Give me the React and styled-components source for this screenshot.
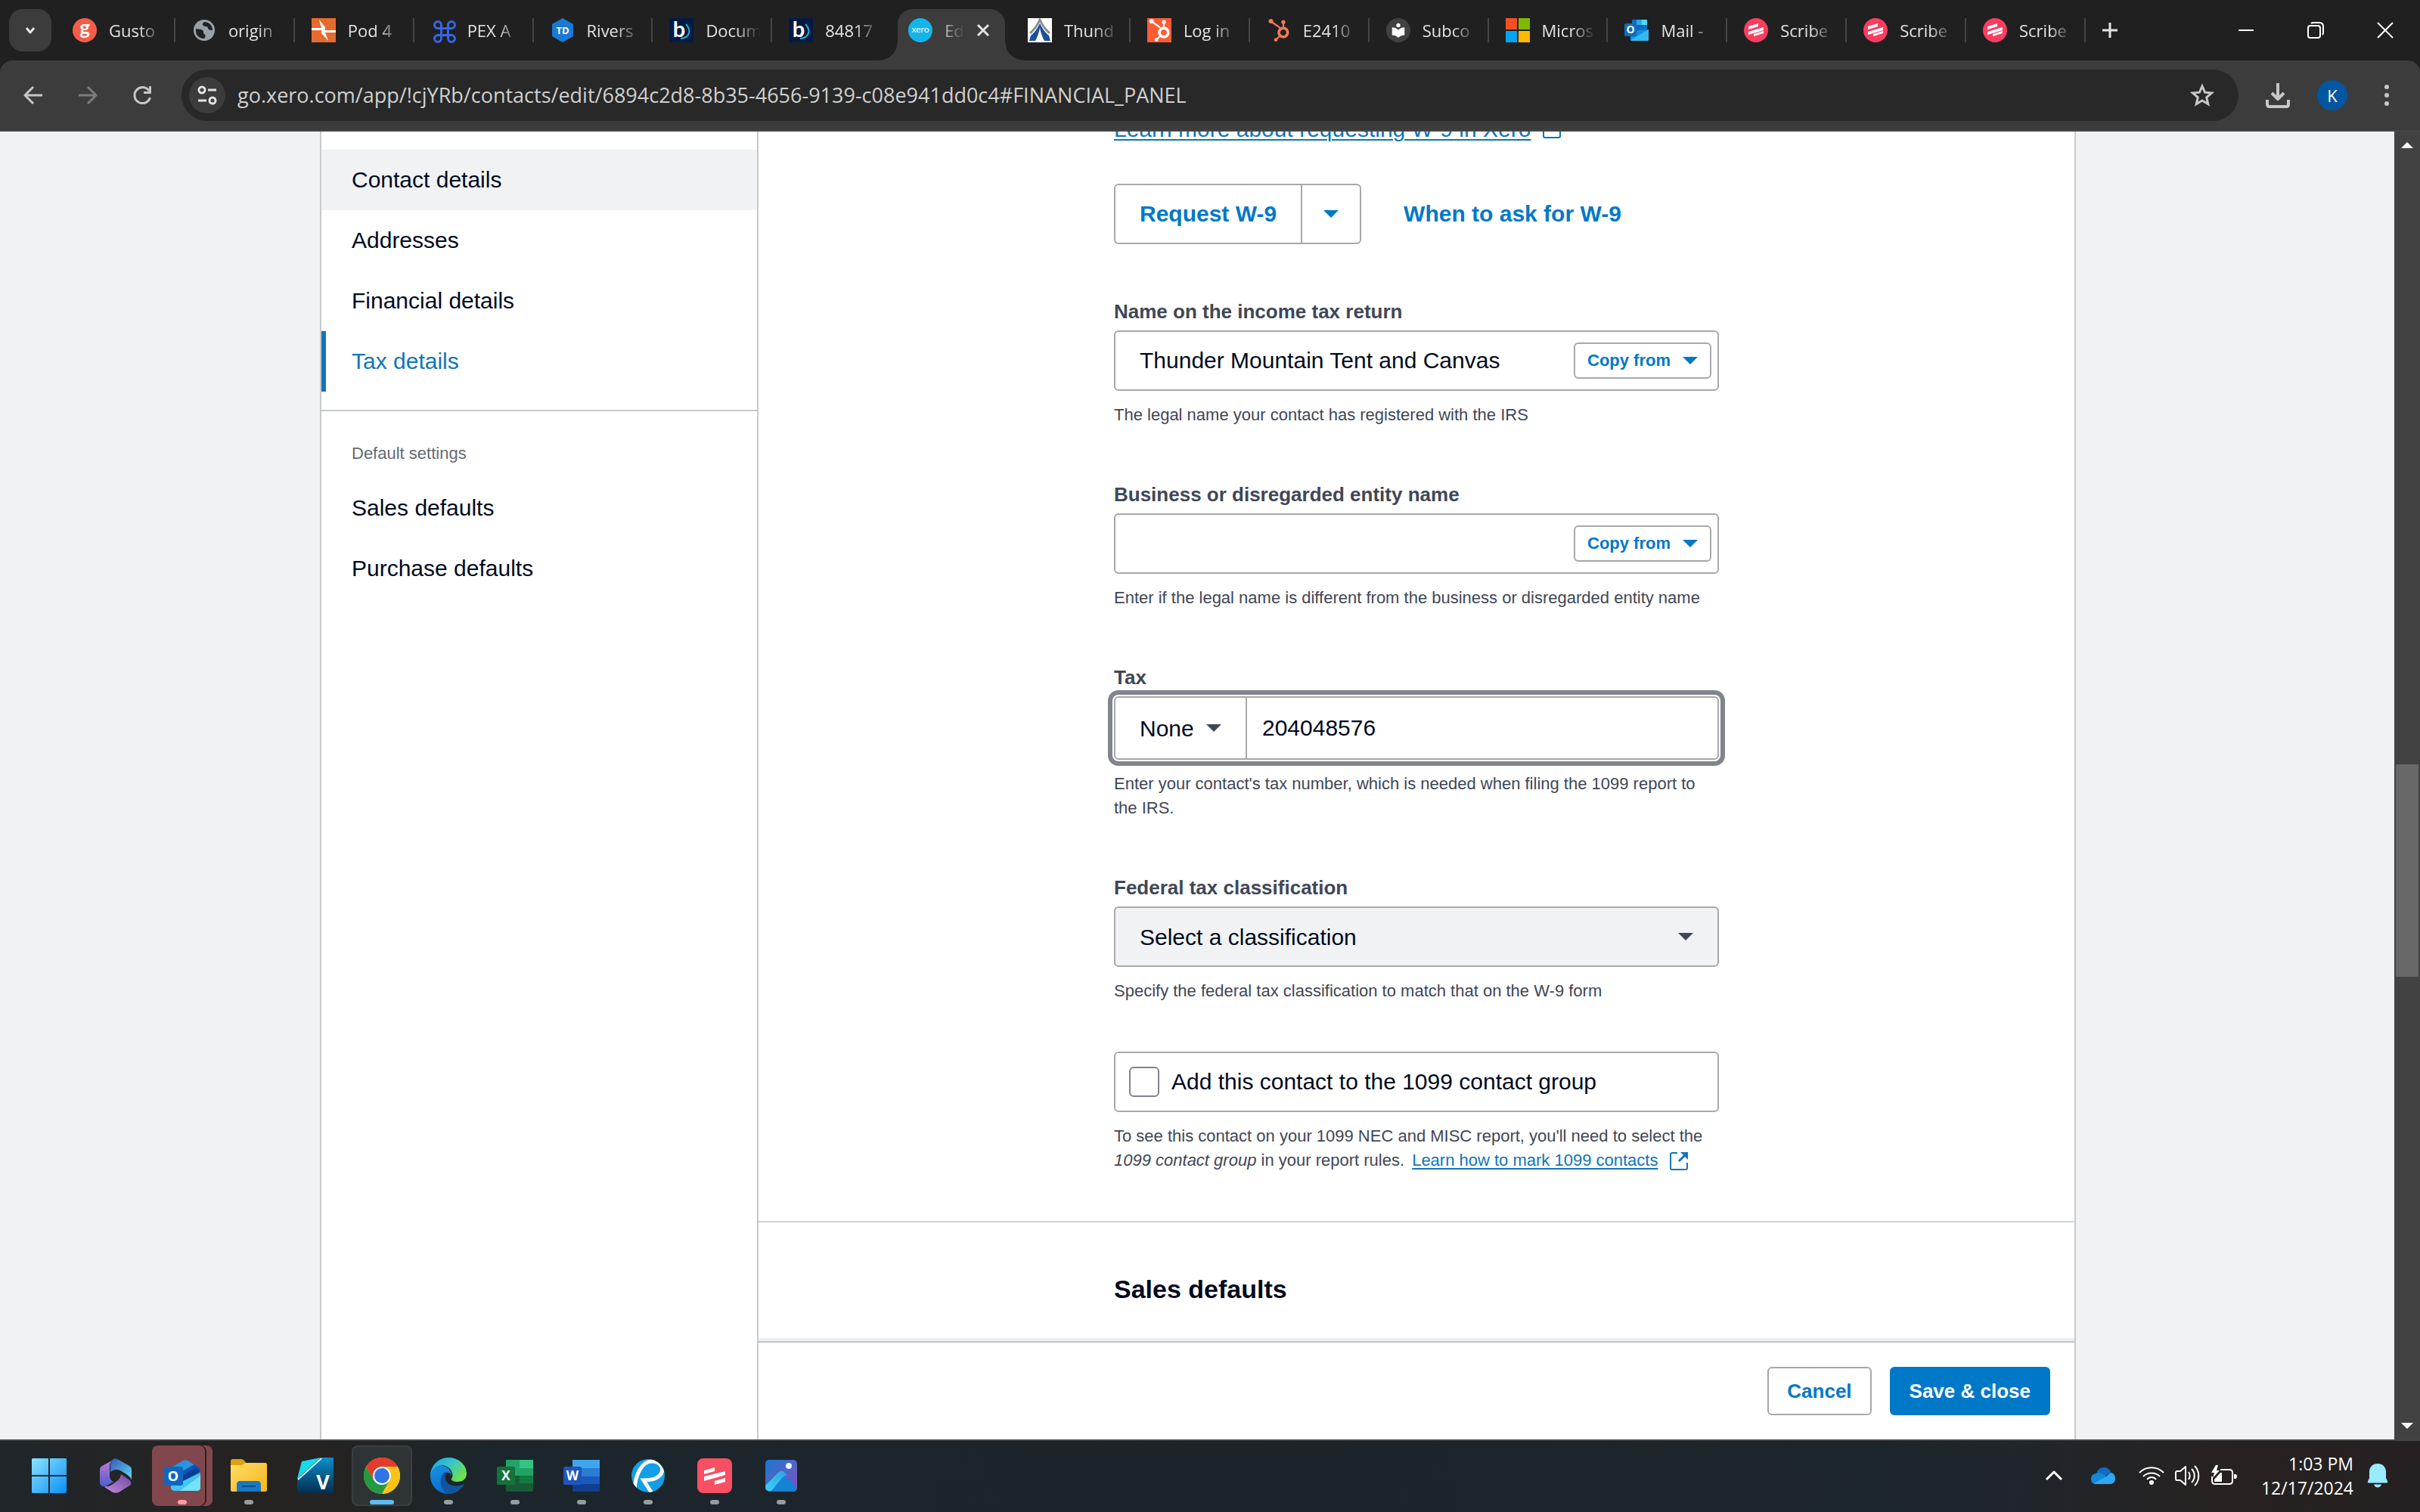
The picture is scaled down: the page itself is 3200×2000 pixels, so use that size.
import { useState } from "react";
import styled, { createGlobalStyle } from "styled-components";
import { Command } from "lucide-react";
import { FaHubspot } from "react-icons/fa";
import { MdLocalLibrary } from "react-icons/md";

const tabs = [
  { id: "gusto", title: "Gusto", icon: <GustoIcon /> },
  { id: "origin", title: "origin", icon: <GlobeIcon /> },
  { id: "pod", title: "Pod 4", icon: <PodIcon /> },
  { id: "pex", title: "PEX A", icon: <Command size={36} color="#3566e6" /> },
  { id: "rivers", title: "Rivers", icon: <TdIcon /> },
  { id: "docum", title: "Docum", icon: <BillIcon /> },
  { id: "84817", title: "84817", icon: <BillIcon /> },
  { id: "xero", title: "Ed", icon: <XeroIcon />, active: true },
  { id: "thunder", title: "Thund", icon: <TentIcon /> },
  { id: "login", title: "Log in", icon: <HubspotIcon /> },
  { id: "e2410", title: "E2410", icon: <FaHubspot size={30} color="#f2795c" /> },
  { id: "subco", title: "Subco", icon: <ReaderIcon /> },
  { id: "micro", title: "Micros", icon: <MicrosoftIcon /> },
  { id: "mail", title: "Mail -", icon: <OutlookIcon size={32} /> },
  { id: "scribe1", title: "Scribe", icon: <ScribeIcon /> },
  { id: "scribe2", title: "Scribe", icon: <ScribeIcon /> },
  { id: "scribe3", title: "Scribe", icon: <ScribeIcon /> },
];

const apps = [
  { name: "Start", icon: <WindowsIcon /> },
  { name: "Microsoft 365", icon: <CopilotIcon /> },
  { name: "Outlook", icon: <OutlookNewIcon />, state: "alert" },
  { name: "File Explorer", icon: <FolderIcon />, state: "open" },
  { name: "Vault", icon: <VaultIcon /> },
  { name: "Chrome", icon: <ChromeIcon />, state: "current" },
  { name: "Edge", icon: <EdgeIcon />, state: "open" },
  { name: "Excel", icon: <OfficeIcon letter="X" tile="#17713c" colors={["#21a366", "#33c481", "#107c41", "#185c37"]} />, state: "open" },
  { name: "Word", icon: <OfficeIcon letter="W" tile="#1d55bd" colors={["#41a5ee", "#2b7cd3", "#185abd", "#103f91"]} stripes />, state: "open" },
  { name: "Revu", icon: <RevuIcon />, state: "open" },
  { name: "Scribe", icon: <ScribeAppIcon />, state: "open" },
  { name: "Photos", icon: <PhotosIcon />, state: "open" },
];

export default function App() {
  const [url, setUrl] = useState("go.xero.com/app/!cjYRb/contacts/edit/6894c2d8-8b35-4656-9139-c08e941dd0c4#FINANCIAL_PANEL");
  return (
    <Screen>
      <GlobalStyle />
      <TabStrip>
        <TabSearch aria-label="Search tabs">
          <Stroke size={20} box="0 0 20 20" width={3}><path d="M5 7l5 6 5-6" /></Stroke>
        </TabSearch>
        <TabList>
          {tabs.map((tab, index) => (
            <Tab key={tab.id} $active={tab.active} $plain={tab.active || tabs[index + 1]?.active}>
              <TabButton>
                <Favicon>{tab.icon}</Favicon>
                <TabTitle>{tab.title}</TabTitle>
              </TabButton>
              {tab.active && (
                <CloseTab aria-label="Close tab">
                  <Stroke size={18} box="0 0 18 18" width={3}><path d="M2 2l14 14M16 2L2 16" /></Stroke>
                </CloseTab>
              )}
            </Tab>
          ))}
        </TabList>
        <NewTab aria-label="New tab">
          <Stroke size={22} box="0 0 22 22" width={3}><path d="M11 1v20M1 11h20" /></Stroke>
        </NewTab>
        <WindowSpacer />
        <WindowButton aria-label="Minimize">
          <Stroke size={20} box="0 0 20 20" width={2}><path d="M0 10h20" /></Stroke>
        </WindowButton>
        <WindowButton aria-label="Restore">
          <Stroke size={22} box="0 0 22 22" width={2}>
            <rect x="1" y="5" width="16" height="16" rx="3" />
            <path d="M5 2c1-1 2-1 3-1h8c3 0 5 2 5 5v8c0 1 0 2-1 3" />
          </Stroke>
        </WindowButton>
        <WindowButton aria-label="Close">
          <Stroke size={22} box="0 0 22 22" width={2}><path d="M1 1l20 20M21 1L1 21" /></Stroke>
        </WindowButton>
      </TabStrip>

      <Toolbar>
        <ToolButton aria-label="Back">
          <Stroke size={26} box="0 0 26 26" width={3}><path d="M25 13H3M13 2L2 13l11 11" /></Stroke>
        </ToolButton>
        <ToolButton aria-label="Forward" disabled>
          <Stroke size={26} box="0 0 26 26" width={3}><path d="M1 13h22M13 2l11 11-11 11" /></Stroke>
        </ToolButton>
        <ToolButton aria-label="Reload">
          <Stroke size={26} box="0 0 26 26" width={3}>
            <path d="M22 7a10.5 10.5 0 1 0 1.500 9" />
            <path d="M23.500 1v8.500H15" />
          </Stroke>
        </ToolButton>
        <AddressBar>
          <SiteInfo aria-label="View site information">
            <Stroke size={26} box="0 0 26 26" width={3}>
              <circle cx="6" cy="6" r="4" /><path d="M14 6h11M1 20h11" /><circle cx="20" cy="20" r="4" />
            </Stroke>
          </SiteInfo>
          <UrlInput aria-label="Address" value={url} onChange={(e) => setUrl(e.target.value)} />
          <StarButton aria-label="Bookmark this tab">
            <Stroke size={32} box="0 0 32 32" width={3} miter>
              <path d="M16 4l3.600 8.200 8.900.8-6.800 5.900 2.100 8.700L16 23l-7.800 4.600 2.100-8.700L3.500 13l8.900-.8z" />
            </Stroke>
          </StarButton>
        </AddressBar>
        <ToolButton aria-label="Downloads">
          <Stroke size={34} box="0 0 34 34" width={4}>
            <path d="M17 1v22M9 14l8 8 8-8" /><path d="M3 23v6c0 2 1 3 3 3h22c2 0 3-1 3-3v-6" />
          </Stroke>
        </ToolButton>
        <ToolButton aria-label="Profile"><Avatar>K</Avatar></ToolButton>
        <ToolButton aria-label="Menu">
          <svg width="8" height="30" viewBox="0 0 8 30" fill="currentColor">
            <circle cx="4" cy="4" r="3" /><circle cx="4" cy="15" r="3" /><circle cx="4" cy="26" r="3" />
          </svg>
        </ToolButton>
      </Toolbar>

      <Viewport>
        <PageArea>
          <ContactPage />
        </PageArea>
        <Scrollbar>
          <ScrollArrow aria-label="Scroll up"><Caret size={16} up color="#fff" /></ScrollArrow>
          <ScrollTrack><ScrollThumb /></ScrollTrack>
          <ScrollArrow aria-label="Scroll down"><Caret size={16} color="#fff" /></ScrollArrow>
        </Scrollbar>
      </Viewport>

      <Taskbar>
        <Apps>
          {apps.map((app) => (
            <AppButton key={app.name} aria-label={app.name} $state={app.state}>
              {app.icon}
              {app.state && <Indicator $state={app.state} />}
            </AppButton>
          ))}
        </Apps>
        <Tray>
          <Stroke size={24} box="0 0 24 24" width={3}><path d="M2 17L12 7l10 10" /></Stroke>
          <OneDriveIcon />
          <TrayGroup>
            <WifiIcon />
            <VolumeIcon />
            <BatteryIcon />
          </TrayGroup>
          <Clock>
            <time>1:03 PM</time>
            <time>12/17/2024</time>
          </Clock>
          <svg width="28" height="34" viewBox="0 0 28 34" fill="#99ecff">
            <path d="M14 1C7.500 1 3 5.500 3 12v8L1 24.500c-.5 1.200 0 2 1.200 2h23.600c1.200 0 1.700-.8 1.200-2L25 20v-8C25 5.500 20.500 1 14 1z" />
            <path d="M9 28.500h10c-.8 2.600-2.600 4-5 4s-4.200-1.400-5-4z" />
          </svg>
        </Tray>
      </Taskbar>
    </Screen>
  );
}

function ContactPage() {
  const [legalName, setLegalName] = useState("Thunder Mountain Tent and Canvas");
  const [businessName, setBusinessName] = useState("");
  const [taxNumber, setTaxNumber] = useState("204048576");

  return (
    <Container>
      <Sidebar>
        <NavGroup>
          <NavLink href="#contact" $hover>Contact details</NavLink>
          <NavLink href="#addresses">Addresses</NavLink>
          <NavLink href="#financial">Financial details</NavLink>
          <NavLink href="#tax" $current>Tax details</NavLink>
        </NavGroup>
        <NavGroup $last>
          <NavHeading>Default settings</NavHeading>
          <NavLink href="#sales">Sales defaults</NavLink>
          <NavLink href="#purchases">Purchase defaults</NavLink>
        </NavGroup>
      </Sidebar>

      <Main>
        <Sections>
          <TaxSection>
            <LearnMore>
              <TextLink href="#w9">Learn more about requesting W-9 in Xero</TextLink>
              <ExternalIcon />
            </LearnMore>

            <RequestRow>
              <SplitButton>
                <button>Request W-9</button>
                <button aria-label="More request options"><Caret color="#0078c8" /></button>
              </SplitButton>
              <PlainButton>When to ask for W-9</PlainButton>
            </RequestRow>

            <Group>
              <Label htmlFor="legal-name">Name on the income tax return</Label>
              <Field>
                <TextInput id="legal-name" value={legalName} onChange={(e) => setLegalName(e.target.value)} />
                <CopyButton>Copy from <Caret color="#0078c8" /></CopyButton>
              </Field>
              <Hint>The legal name your contact has registered with the IRS</Hint>
            </Group>

            <Group>
              <Label htmlFor="business-name">Business or disregarded entity name</Label>
              <Field>
                <TextInput id="business-name" value={businessName} onChange={(e) => setBusinessName(e.target.value)} />
                <CopyButton>Copy from <Caret color="#0078c8" /></CopyButton>
              </Field>
              <Hint>Enter if the legal name is different from the business or disregarded entity name</Hint>
            </Group>

            <Group>
              <Label htmlFor="tax-number">Tax</Label>
              <Field $focused>
                <TypeSelect>
                  <select aria-label="Tax number type" defaultValue="None">
                    <option>None</option>
                    <option>EIN</option>
                    <option>SSN</option>
                  </select>
                  <Caret color="#404756" />
                </TypeSelect>
                <TextInput id="tax-number" $joined value={taxNumber} onChange={(e) => setTaxNumber(e.target.value)} />
              </Field>
              <Hint>Enter your contact's tax number, which is needed when filing the 1099 report to the IRS.</Hint>
            </Group>

            <Group>
              <Label htmlFor="classification">Federal tax classification</Label>
              <Field $filled>
                <SelectWrap>
                  <select id="classification" defaultValue="">
                    <option value="">Select a classification</option>
                    <option>Individual/Sole proprietor</option>
                    <option>C Corporation</option>
                  </select>
                  <Caret color="#404756" />
                </SelectWrap>
              </Field>
              <Hint>Specify the federal tax classification to match that on the W-9 form</Hint>
            </Group>

            <CheckGroup>
              <CheckField>
                <input type="checkbox" />
                Add this contact to the 1099 contact group
              </CheckField>
              <Hint>
                To see this contact on your 1099 NEC and MISC report, you'll need to select the{" "}
                <em>1099 contact group</em> in your report rules.{" "}
                <TextLink href="#mark-1099">Learn how to mark 1099 contacts</TextLink>
                <HintIcon><ExternalIcon /></HintIcon>
              </Hint>
            </CheckGroup>
          </TaxSection>

          <SalesSection>
            <h2>Sales defaults</h2>
          </SalesSection>
        </Sections>

        <Footer>
          <FooterButton>Cancel</FooterButton>
          <FooterButton $primary>Save &amp; close</FooterButton>
        </Footer>
      </Main>
    </Container>
  );
}

/* icons */

function Stroke({ size, box, width, miter, children }) {
  return (
    <svg width={size} height={size} viewBox={box} fill="none" stroke="currentColor" strokeWidth={width} strokeLinejoin={miter ? "miter" : "round"}>
      {children}
    </svg>
  );
}

function Caret({ size = 20, color, up }) {
  return (
    <svg width={size} height={size / 2} viewBox="0 0 20 10" fill={color} aria-hidden="true">
      <path d={up ? "M0 10h20L10 0z" : "M0 0h20L10 10z"} />
    </svg>
  );
}

function ExternalIcon() {
  return (
    <svg width="24" height="24" viewBox="0 0 24 24" fill="none" stroke="#1076b8" strokeWidth="2" aria-hidden="true">
      <path d="M10 1H3C2 1 1 2 1 3v18c0 1 1 2 2 2h18c1 0 2-1 2-2v-7" />
      <path d="M12 12L21 3" strokeWidth="3" />
      <path d="M14 0h10v10z" fill="#1076b8" stroke="none" />
    </svg>
  );
}

function GustoIcon() {
  return (
    <svg width="32" height="32" viewBox="0 0 32 32">
      <circle cx="16" cy="16" r="16" fill="#f45d48" />
      <text x="16" y="22" fontSize="26" fontWeight="700" fontFamily="Lato, sans-serif" fill="#fff" textAnchor="middle">g</text>
    </svg>
  );
}

function GlobeIcon() {
  return (
    <svg width="28" height="28" viewBox="0 0 28 28">
      <circle cx="14" cy="14" r="14" fill="#9aa0a6" />
      <path d="M3 12c3 1 7 0 9 2s0 4 2 5 2 4 0 6C7 25 2 20 3 12zM14 3c-2 2-3 3-1 5s5 0 6 3 3 3 6 3c0-6-4-11-11-11z" fill="#202124" />
    </svg>
  );
}

function PodIcon() {
  return (
    <svg width="32" height="32" viewBox="0 0 32 32">
      <path fill="#e66b2e" d="M0 0h32v32H0z" />
      <path fill="#fff" d="M10 2l8 10v4H0v-3h13zM22 30l-9-10v-4h19v3H18z" />
    </svg>
  );
}

function TdIcon() {
  return (
    <svg width="32" height="32" viewBox="0 0 32 32">
      <path fill="#1b78d6" d="M16 0l14 8v16l-14 8-14-8V8z" />
      <text x="16" y="21" fontSize="13" fontWeight="700" fontFamily="Open Sans, sans-serif" fill="#fff" textAnchor="middle">TD</text>
    </svg>
  );
}

function BillIcon() {
  return (
    <svg width="32" height="32" viewBox="0 0 32 32">
      <path fill="#041a45" d="M0 0h32v32H0z" />
      <text x="13" y="25" fontSize="29" fontWeight="700" fontFamily="Lato, sans-serif" fill="#fff" textAnchor="middle">b</text>
      <path d="M22 8c7 7 6 18-7 19" fill="none" stroke="#19b5c9" strokeWidth="2" />
    </svg>
  );
}

function XeroIcon() {
  return (
    <svg width="32" height="32" viewBox="0 0 32 32">
      <circle cx="16" cy="16" r="16" fill="#13b5ea" />
      <text x="16" y="19" fontSize="12" fontFamily="Lato, sans-serif" fill="#fff" textAnchor="middle">xero</text>
    </svg>
  );
}

function TentIcon() {
  return (
    <svg width="32" height="32" viewBox="0 0 32 32">
      <path fill="#fff" d="M0 0h32v32H0z" />
      <path d="M3 20C9 15 13 9 16 2c3 7 7 13 13 18" fill="none" stroke="#8b8e93" strokeWidth="3" />
      <path fill="#1d4f9c" d="M16 7C12 15 8 20 4 23l-2 7h8c3-5 5-12 6-17 1 5 3 12 6 17h8l-2-7c-4-3-8-8-12-16z" />
    </svg>
  );
}

function HubspotIcon() {
  return <IconTile><FaHubspot size={30} /></IconTile>;
}

function ReaderIcon() {
  return <IconTile $round><MdLocalLibrary size={22} /></IconTile>;
}

function MicrosoftIcon() {
  return (
    <svg width="32" height="32" viewBox="0 0 32 32">
      <path fill="#f25022" d="M0 0h15v15H0z" /><path fill="#7fba00" d="M17 0h15v15H17z" />
      <path fill="#00a4ef" d="M0 17h15v15H0z" /><path fill="#ffb900" d="M17 17h15v15H17z" />
    </svg>
  );
}

function OutlookIcon({ size }) {
  return (
    <svg width={size} height={size} viewBox="0 0 32 32">
      <path fill="#0f6cbd" d="M10 2h20v14H10z" /><path fill="#28a8ea" d="M16 2h7v7h-7z" />
      <path fill="#50d9ff" d="M23 2h7v7h-7z" /><path fill="#0358a7" d="M10 9h6v7h-6z" />
      <path fill="#1490df" d="M8 17l24-2v13c0 1-1 2-2 2H10c-1 0-2-1-2-2z" />
      <path fill="#35b8f1" d="M8 29l24-14v13c0 1-1 2-2 2H10z" />
      <rect y="7" width="16" height="17" rx="2" fill="#0f6cbd" />
      <text x="8" y="20" fontSize="14" fontWeight="700" fontFamily="Open Sans, sans-serif" fill="#fff" textAnchor="middle">O</text>
    </svg>
  );
}

function ScribeIcon() {
  return (
    <svg width="32" height="32" viewBox="0 0 32 32">
      <circle cx="16" cy="16" r="16" fill="#fc3d60" />
      <path fill="#fff" d="M6 11l13-4v4L6 15zM6 18l20-6v4L6 22zM13 24l13-4v-3l-13 4z" />
    </svg>
  );
}

function WindowsIcon() {
  return (
    <svg width="46" height="46" viewBox="0 0 46 46">
      <defs>
        <linearGradient id="win" x1="0" y1="0" x2="46" y2="46" gradientUnits="userSpaceOnUse">
          <stop stopColor="#8ae4ff" /><stop offset="1" stopColor="#0a8ff5" />
        </linearGradient>
      </defs>
      <path fill="url(#win)" d="M1 0h21v22H0V1zM24 0h21l1 1v21H24zM0 24h22v22H1l-1-1zM24 24h22v21l-1 1H24z" />
    </svg>
  );
}

function CopilotIcon() {
  return (
    <svg width="42" height="46" viewBox="0 0 42 46">
      <defs>
        <linearGradient id="c1" x1="0" y1="0" x2="0" y2="1"><stop stopColor="#c77ad9" /><stop offset="1" stopColor="#4a5fc9" /></linearGradient>
        <linearGradient id="c2" x1="0" y1="0" x2="1" y2="1"><stop stopColor="#3556b8" /><stop offset="1" stopColor="#5fdcf5" /></linearGradient>
        <linearGradient id="c3" x1="0" y1="1" x2="1" y2="0"><stop stopColor="#c58be0" /><stop offset="1" stopColor="#6b489c" /></linearGradient>
      </defs>
      <path fill="url(#c1)" d="M20 1L3 10c-2 1-3 3-3 5v17c0 4 4 6 8 5l10-6c-4-2-5-5-5-8V10c0-5 3-8 7-9z" />
      <path fill="url(#c2)" d="M18 1c3-1 5 0 7 1l14 8c2 1 3 3 3 5v14c0-3-4-6-7-8l-8-5c-5-2-9-1-13 2v-9c0-4 1-6 4-8z" />
      <path fill="url(#c3)" d="M8 37c5 1 9-3 12-5 5-3 7-6 8-11l9 6c4 3 5 5 4 8l-16 10c-3 1-5 1-8 0L6 38z" />
    </svg>
  );
}

function OutlookNewIcon() {
  return (
    <svg width="50" height="44" viewBox="0 0 50 44">
      <path fill="#2596df" d="M9 12L26 2c2-1 4-1 6 0l16 10-24 16H9z" />
      <path fill="#0d52b3" d="M22 18L41 7l7 5c2 2 1 4-1 6L24 31z" />
      <path fill="#0a3f98" d="M24 22l20-10 4 4-24 15z" />
      <path fill="#43c6f3" d="M49 18v19c0 3-2 5-5 5H16c-4 0-6-2-6-5V30h14z" />
      <path fill="#74e2fa" d="M49 22v15c0 3-2 5-5 5H22z" />
      <rect x="1" y="10" width="25" height="25" rx="3" fill="#1066c0" />
      <text x="13" y="29" fontSize="18" fontWeight="700" fontFamily="Open Sans, sans-serif" fill="#fff" textAnchor="middle">O</text>
    </svg>
  );
}

function FolderIcon() {
  return (
    <svg width="48" height="44" viewBox="0 0 48 44">
      <defs>
        <linearGradient id="fold" x1="0" y1="0" x2="1" y2="1"><stop stopColor="#ffdc66" /><stop offset="1" stopColor="#f8b71b" /></linearGradient>
      </defs>
      <path fill="#dca015" d="M0 3c0-2 1-3 3-3h11c2 0 3 1 4 2l4 5-6 5H0z" />
      <path fill="url(#fold)" d="M0 8h15l5-3h26c1 0 2 1 2 2v34c0 1-1 2-2 2H2c-1 0-2-1-2-2z" />
      <path fill="#1a76c2" d="M8 43V34c0-4 2-5 5-5h22c3 0 5 1 5 5v9z" />
      <path d="M15 36h18" stroke="#0d4f88" strokeWidth="2" />
    </svg>
  );
}

function VaultIcon() {
  return (
    <svg width="48" height="48" viewBox="0 0 48 48">
      <defs>
        <linearGradient id="vlt" x1="0" y1="0" x2="0" y2="1"><stop stopColor="#0b8ecb" /><stop offset="1" stopColor="#062b4c" /></linearGradient>
      </defs>
      <path fill="url(#vlt)" d="M0 30L32 0h15l1 1v47H0z" />
      <path fill="#16d9ec" d="M0 28L6 5l25-5z" /><path d="M1 29L32 1" stroke="#d8fbff" strokeWidth="2" />
      <text x="34" y="42" fontSize="27" fontWeight="700" fontFamily="Open Sans, sans-serif" fill="#fff" textAnchor="middle">V</text>
    </svg>
  );
}

function ChromeIcon() {
  return (
    <svg width="48" height="48" viewBox="0 0 48 48">
      <circle cx="24" cy="24" r="24" fill="#fbc116" />
      <path fill="#e33b2e" d="M3.200 12A24 24 0 0 1 44.800 12H24L13.600 30z" />
      <path fill="#269a42" d="M3.200 12A24 24 0 0 0 24 48L34.400 30 24 24 13.600 30z" />
      <path fill="#fbc116" d="M24 48a24 24 0 0 0 20.800-36H24l10.400 18z" />
      <circle cx="24" cy="24" r="12" fill="#fff" /><circle cx="24" cy="24" r="10" fill="#2f74e8" />
    </svg>
  );
}

function EdgeIcon() {
  return (
    <svg width="48" height="48" viewBox="0 0 48 48">
      <defs>
        <linearGradient id="e1" x1="0" y1="0" x2="1" y2="0.6"><stop stopColor="#1c9ddd" /><stop offset=".5" stopColor="#35c4cf" /><stop offset="1" stopColor="#6fe04b" /></linearGradient>
        <linearGradient id="e2" x1="0" y1="0" x2="0.4" y2="1"><stop stopColor="#1793e0" /><stop offset="1" stopColor="#0a6bd0" /></linearGradient>
      </defs>
      <path fill="url(#e2)" d="M0 24C0 14 8 9 16 11c8 1 12 7 12 13-1-4-5-5-8-4-8 3-6 18 12 19 5 0 8-1 11-3C39 43 32 48 24 48 11 48 0 38 0 24z" />
      <path fill="#12559f" d="M20 19c-8 4-10 18 2 29 9 1 17-4 22-11 1-1 0-2-2-1-10 4-20 0-22-7-1-4 0-7 0-10z" />
      <path fill="url(#e1)" d="M0 23C1 10 11 0 24 0c14 0 24 10 24 21 0 8-6 11-12 11-5 0-9-2-8-4 3-4 1-10-3-14C17 7 3 10 0 23z" />
    </svg>
  );
}

function OfficeIcon({ letter, tile, colors, stripes }) {
  const [a, b, c, d] = colors;
  return (
    <svg width="48" height="44" viewBox="0 0 48 44">
      {stripes ? (
        <>
          <path fill={a} d="M12 1h36v11H12z" /><path fill={b} d="M12 12h36v11H12z" />
          <path fill={c} d="M12 23h36v10H12z" /><path fill={d} d="M12 33h36v10H12z" />
        </>
      ) : (
        <>
          <path fill={a} d="M12 1h18v21H12z" /><path fill={b} d="M30 1h18v11H30z" />
          <path fill={a} d="M30 12h18v10H30z" /><path fill={c} d="M30 22h18v10H30z" />
          <path fill={d} d="M12 22h18v10h18v11H12z" />
        </>
      )}
      <rect y="10" width="24" height="24" rx="2" fill={tile} />
      <text x="12" y="28" fontSize="17" fontWeight="700" fontFamily="Open Sans, sans-serif" fill="#fff" textAnchor="middle">{letter}</text>
    </svg>
  );
}

function RevuIcon() {
  return (
    <svg width="46" height="46" viewBox="0 0 46 46">
      <clipPath id="revu"><circle cx="23" cy="23" r="22" /></clipPath>
      <circle cx="23" cy="23" r="22" fill="#129fe6" />
      <path clipPath="url(#revu)" d="M5 42C6 20 16 3 29 4s16 12 9 19c-5 5-14 6-21 6l11 17" fill="none" stroke="#fff" strokeWidth="5" />
    </svg>
  );
}

function ScribeAppIcon() {
  return (
    <svg width="46" height="46" viewBox="0 0 46 46">
      <rect width="46" height="46" rx="8" fill="#f94f63" />
      <path fill="#fff" d="M9 16l14-4v5L9 21zM9 24l28-7v5L9 30zM23 30l14-4v5l-14 4z" />
    </svg>
  );
}

function PhotosIcon() {
  return (
    <svg width="42" height="42" viewBox="0 0 42 42">
      <defs>
        <linearGradient id="ph1" x1="0" y1="0" x2="1" y2="1"><stop stopColor="#1879cf" /><stop offset="1" stopColor="#8351bd" /></linearGradient>
        <linearGradient id="ph2" x1="0" y1="1" x2="1" y2="0"><stop stopColor="#3fd0f5" /><stop offset="1" stopColor="#2aa4e2" /></linearGradient>
      </defs>
      <rect width="42" height="42" rx="5" fill="url(#ph1)" />
      <path fill="#1583d3" d="M3 41L24 20l17 16c1 3-1 6-4 6H6z" />
      <path fill="url(#ph2)" d="M1 33l16-16c3-3 6-3 9 0l3 4c-3-1-5 1-7 3L9 40c-5 4-11-2-8-7z" />
      <circle cx="31" cy="8" r="4" fill="#e6f6ff" />
    </svg>
  );
}

function OneDriveIcon() {
  return (
    <svg width="34" height="24" viewBox="0 0 34 24">
      <path fill="#0f6cc4" d="M8 9C10 3 14 1 18 1c5 0 8 3 9 7L15 16z" />
      <path fill="#1487dc" d="M8 9c-4 0-7 3-7 7 0 5 3 7 6 7l14-10-6-4c-2-1-4-1-7 0z" />
      <path fill="#2ba9f2" d="M5 22l16-9 6-5c4 0 6 4 6 8s-3 7-6 7H8c-1 0-2 0-3-1z" />
    </svg>
  );
}

function WifiIcon() {
  return (
    <svg width="34" height="26" viewBox="0 0 34 26" fill="none" stroke="#fff" strokeWidth="2">
      <path d="M1 9c9-9 23-9 32 0M6 14c6-6 16-6 22 0M11 18c3-4 9-4 12 0" />
      <circle cx="17" cy="22" r="3" fill="#fff" stroke="none" />
    </svg>
  );
}

function VolumeIcon() {
  return (
    <svg width="34" height="30" viewBox="0 0 34 30" fill="none" stroke="#fff" strokeWidth="2" strokeLinejoin="round">
      <path d="M1 11v8c0 1 1 2 2 2h4l7 6V3L7 9H3c-1 0-2 1-2 2z" />
      <path d="M18 10c2 3 2 7 0 10M22 6c5 5 5 13 0 18M26 2c7 7 7 19 0 26" />
    </svg>
  );
}

function BatteryIcon() {
  return (
    <svg width="34" height="28" viewBox="0 0 34 28">
      <path d="M12 6h12c3 0 4 1 4 4v11c0 3-1 4-4 4H5c-3 0-4-1-4-4v-6" fill="none" stroke="#fff" strokeWidth="2" />
      <path fill="#fff" d="M30 12h2c1 0 2 1 2 3s-1 3-2 3h-2zM4 22v-3l8-9h2v12zM6 0L0 10h4L2 17 11 7H7L9 0z" />
    </svg>
  );
}

/* styles */

const GlobalStyle = createGlobalStyle`
  * {
    box-sizing: border-box;
  }
  body {
    margin: 0;
    font-family: "Liberation Sans", Arial, sans-serif;
    font-size: 30px;
    color: #000a1e;
  }
  button, input, select {
    font: inherit;
    color: inherit;
    background: none;
    border: 0;
    margin: 0;
    padding: 0;
    outline: 0;
  }
  svg {
    display: block;
    flex: none;
  }
`;
const Screen = styled.div`
  height: 100vh;
  display: flex;
  flex-direction: column;
  overflow: hidden;
  background: #202020;
`;
const TabStrip = styled.header`
  height: 80px;
  flex: none;
  display: flex;
  align-items: center;
  padding-left: 12px;
  color: #e3e3e3;
  font-family: "Open Sans", "Noto Sans", sans-serif;
  font-size: 22px;
`;
const TabSearch = styled.button`
  width: 56px;
  height: 56px;
  margin-right: 6px;
  border-radius: 18px;
  background: #3c3c3c;
  display: grid;
  place-items: center;
`;
const TabList = styled.div`
  flex: 1;
  min-width: 0;
  height: 100%;
  display: flex;
`;
const Tab = styled.div`
  flex: 1 1 0;
  min-width: 0;
  position: relative;
  display: flex;
  align-items: center;
  padding: 0 16px 0 22px;
  z-index: 0;

  &::after {
    content: "";
    position: absolute;
    right: 0;
    top: 24px;
    width: 2px;
    height: 32px;
    background: ${(props) => (props.$plain ? "transparent" : "#454545")};
  }

  ${(props) => props.$active && `
    &::before {
      content: "";
      position: absolute;
      z-index: -1;
      inset: 12px -16px 0;
      background:
        radial-gradient(circle at 0 0, transparent 23px, #3c3c3c 24px) left bottom / 24px 24px no-repeat,
        radial-gradient(circle at 100% 0, transparent 23px, #3c3c3c 24px) right bottom / 24px 24px no-repeat;
    }
    &::after {
      z-index: -1;
      inset: 12px 8px 0;
      width: auto;
      height: auto;
      border-radius: 20px 20px 0 0;
      background: #3c3c3c;
    }
  `}
`;
const TabButton = styled.button`
  flex: 1;
  min-width: 0;
  display: flex;
  align-items: center;
  gap: 16px;
`;
const Favicon = styled.span`
  width: 32px;
  height: 32px;
  flex: none;
  display: grid;
  place-items: center;
`;
const TabTitle = styled.span`
  flex: 1;
  min-width: 0;
  overflow: hidden;
  white-space: nowrap;
  text-align: left;
  line-height: 32px;
  mask-image: linear-gradient(to right, #000 calc(100% - 32px), transparent);
`;
const CloseTab = styled.button`
  flex: none;
  margin: 0 12px 0 16px;
`;
const NewTab = styled.button`
  width: 64px;
  height: 56px;
  display: grid;
  place-items: center;
`;
const WindowSpacer = styled.div`
  width: 102px;
`;
const WindowButton = styled.button`
  width: 92px;
  height: 80px;
  display: grid;
  place-items: center;
  color: #fff;
`;
const IconTile = styled.span`
  width: 32px;
  height: 32px;
  display: grid;
  place-items: center;
  border-radius: ${(props) => (props.$round ? "50%" : "0")};
  background: ${(props) => (props.$round ? "#414141" : "#ff5c35")};
  color: #fff;
`;

const Toolbar = styled.div`
  height: 94px;
  flex: none;
  display: flex;
  align-items: center;
  padding: 0 8px;
  background: #3c3c3c;
  border-bottom: 2px solid #474747;
  border-radius: 16px 16px 0 0;
  color: #c7c7c7;
  font-family: "Open Sans", "Noto Sans", sans-serif;
`;
const ToolButton = styled.button`
  width: 72px;
  height: 72px;
  flex: none;
  display: grid;
  place-items: center;

  &:disabled {
    color: #7c7c7c;
  }
`;
const AddressBar = styled.div`
  flex: 1;
  height: 68px;
  margin: 0 16px;
  padding: 0 32px 0 10px;
  border-radius: 34px;
  background: #282828;
  display: flex;
  align-items: center;
  gap: 16px;
`;
const SiteInfo = styled.button`
  width: 48px;
  height: 48px;
  border-radius: 50%;
  background: #3c3c3c;
  color: #e3e3e3;
  display: grid;
  place-items: center;
`;
const UrlInput = styled.input`
  flex: 1;
  min-width: 0;
  font-size: 27px;
  line-height: 36px;
  color: #d0d0d0;
`;
const StarButton = styled.button`
  flex: none;
`;
const Avatar = styled.span`
  width: 40px;
  height: 40px;
  border-radius: 50%;
  background: #00579f;
  color: #fff;
  font-size: 22px;
  line-height: 40px;
`;

const Viewport = styled.div`
  flex: 1;
  min-height: 0;
  display: flex;
`;
const PageArea = styled.div`
  flex: 1;
  min-width: 0;
  display: flex;
  justify-content: center;
  background: #f0f2f4;
`;
const Scrollbar = styled.div`
  width: 32px;
  padding-right: 2px;
  display: flex;
  flex-direction: column;
  background: #424242;
  box-shadow: -2px 0 0 #424242;
`;
const ScrollArrow = styled.button`
  height: 36px;
  display: grid;
  place-items: center;
`;
const ScrollTrack = styled.div`
  flex: 1;
  display: grid;
  grid-template-rows: 801fr 281fr 576fr;
`;
const ScrollThumb = styled.div`
  grid-row: 2;
  background: #686868;
`;

const Container = styled.div`
  width: 100%;
  max-width: 2322px;
  display: flex;
  background: #fff;
  border: solid #c8cacd;
  border-width: 0 2px;
`;
const Sidebar = styled.nav`
  width: 578px;
  flex: none;
  border-right: 2px solid #c8cacd;
`;
const NavGroup = styled.div`
  display: flex;
  flex-direction: column;
  padding: ${(props) => (props.$last ? "40px" : "24px")} 0 24px;
  border-bottom: ${(props) => (props.$last ? "0" : "2px solid #c8cacd")};
`;
const NavLink = styled.a`
  padding: 16px 40px 16px ${(props) => (props.$current ? "34px" : "40px")};
  border-left: ${(props) => (props.$current ? "6px solid #1076b8" : "0")};
  background: ${(props) => (props.$hover ? "#f0f2f4" : "none")};
  color: ${(props) => (props.$current ? "#1076b8" : "#000a1e")};
  line-height: 48px;
  text-decoration: none;
`;
const NavHeading = styled.span`
  padding: 0 40px;
  margin-bottom: 16px;
  font-size: 22px;
  line-height: 32px;
  color: #666a73;
`;

const Main = styled.main`
  flex: 1;
  min-width: 0;
  display: flex;
  flex-direction: column;
`;
const Sections = styled.div`
  flex: 1;
  min-height: 0;
  overflow: hidden;
`;
const TaxSection = styled.section`
  /* scrolled up so the first line is partly under the toolbar */
  margin-top: -27px;
  padding-bottom: 64px;
  border-bottom: 2px solid #d0d2d5;
  display: flex;
  flex-direction: column;
  align-items: center;
  gap: 72px;

  > * {
    width: 100%;
    max-width: 800px;
  }
`;
const LearnMore = styled.div`
  display: flex;
  align-items: center;
  gap: 16px;
  line-height: 48px;
  margin-bottom: -24px;
`;
const TextLink = styled.a`
  color: #1076b8;
  text-decoration: underline;
  text-decoration-thickness: 2px;
  text-underline-offset: 3px;
`;
const RequestRow = styled.div`
  display: flex;
  align-items: center;
  gap: 56px;
  color: #0078c8;
  font-weight: 700;
`;
const SplitButton = styled.div`
  height: 80px;
  display: flex;
  border: 2px solid #a6a8ab;
  border-radius: 6px;

  button {
    padding: 0 32px;
  }
  button + button {
    padding: 0 28px;
    border-left: 2px solid #a6a8ab;
  }
`;
const PlainButton = styled.button`
  line-height: 48px;
`;
const Group = styled.div`
  display: flex;
  flex-direction: column;
`;
const Label = styled.label`
  font-size: 26px;
  font-weight: 700;
  line-height: 34px;
  margin-bottom: 8px;
  color: #404756;
`;
const Field = styled.div`
  height: ${(props) => (props.$focused ? "84px" : "80px")};
  display: flex;
  align-items: center;
  border: 2px solid #a6a8ab;
  border-radius: 6px;
  background: ${(props) => (props.$filled ? "#f0f2f4" : "#fff")};
  box-shadow: ${(props) => (props.$focused ? "0 0 0 2px #fff, 0 0 0 8px #80848c" : "none")};
`;
const TextInput = styled.input`
  flex: 1;
  min-width: 0;
  align-self: stretch;
  padding-left: ${(props) => (props.$joined ? "20px" : "32px")};
`;
const CopyButton = styled.button`
  height: 48px;
  margin-right: 8px;
  padding: 0 16px;
  display: flex;
  align-items: center;
  gap: 16px;
  border: 2px solid #a6a8ab;
  border-radius: 6px;
  font-size: 22px;
  font-weight: 700;
  color: #0078c8;
`;
const SelectWrap = styled.div`
  flex: 1;
  align-self: stretch;
  display: grid;
  align-items: center;

  select, svg {
    grid-area: 1 / 1;
  }
  select {
    height: 100%;
    appearance: none;
    padding: 0 64px 0 32px;
  }
  svg {
    justify-self: end;
    margin-right: 32px;
    pointer-events: none;
  }
`;
const TypeSelect = styled(SelectWrap)`
  flex: none;
  width: 174px;
  border-right: 2px solid #a6a8ab;

  select {
    padding-right: 0;
  }
`;
const Hint = styled.p`
  margin: 16px 0 0;
  font-size: 22px;
  line-height: 32px;
  color: #404756;

  a {
    margin-left: 4px;
  }
`;
const HintIcon = styled.span`
  display: inline-block;
  vertical-align: middle;
  margin-left: 16px;
  line-height: 0;
`;
const CheckGroup = styled(Group)`
  margin-top: -8px;
`;
const CheckField = styled.label`
  height: 80px;
  display: flex;
  align-items: center;
  gap: 16px;
  padding: 0 18px;
  border: 2px solid #a6a8ab;
  border-radius: 6px;

  input {
    appearance: none;
    width: 40px;
    height: 40px;
    border: 2px solid #80848c;
    border-radius: 6px;
    background: #fff;
  }
`;
const SalesSection = styled.section`
  padding: 64px 32px;
  display: flex;
  justify-content: center;

  h2 {
    width: 100%;
    max-width: 800px;
    margin: 0;
    font-size: 34px;
    line-height: 48px;
  }
`;
const Footer = styled.footer`
  height: 130px;
  flex: none;
  display: flex;
  align-items: center;
  justify-content: flex-end;
  gap: 24px;
  padding: 0 32px;
  position: relative;
  background: #fff;
  border-top: 2px solid #c1c6ca;
  box-shadow: 0 -4px 0 #eceff1;
`;
const FooterButton = styled.button`
  height: 64px;
  padding: 0 24px;
  border: 2px solid ${(props) => (props.$primary ? "#0078c8" : "#a6a8ab")};
  border-radius: 6px;
  background: ${(props) => (props.$primary ? "#0078c8" : "#fff")};
  color: ${(props) => (props.$primary ? "#fff" : "#0078c8")};
  font-size: 26px;
  font-weight: 700;
`;

const Taskbar = styled.footer`
  height: 96px;
  flex: none;
  display: flex;
  align-items: center;
  justify-content: space-between;
  padding: 0 42px 0 25px;
  box-shadow: inset 0 2px 0 #424548;
  background: linear-gradient(to right, #20262a, #252321 9%, #242322 14%, #1b262c 20%, #1c242a 50%, #1b262c 78%, #20252a 84%, #272221 92%, #252122);
  color: #fff;
  font-family: "Open Sans", "Noto Sans", sans-serif;
`;
const Apps = styled.div`
  display: flex;
  gap: 8px;
`;
const stateFill = { alert: "#82474c", current: "#2e3335" };
const AppButton = styled.button`
  position: relative;
  width: 80px;
  height: 80px;
  display: grid;
  place-items: center;
  border-radius: 8px;
  background: ${(props) => stateFill[props.$state] || "none"};
  box-shadow: ${(props) => {
    if (props.$state === "current") return "inset 0 0 0 2px #3a3f41";
    if (props.$state === "alert") return "inset -8px 0 0 #82474c, inset -10px 0 0 #2c2223";
    return "none";
  }};
`;
const Indicator = styled.span`
  position: absolute;
  bottom: 2px;
  left: 50%;
  width: ${(props) => (props.$state === "current" ? "32px" : "12px")};
  height: 6px;
  border-radius: 3px;
  transform: translateX(-50%);
  background: ${(props) => {
    if (props.$state === "current") return "#5bbcf0";
    return props.$state === "alert" ? "#ff9aa5" : "#979ca0";
  }};
`;
const Tray = styled.div`
  display: flex;
  align-items: center;
  gap: 18px;

  > svg:first-child {
    margin-right: 18px;
  }
`;
const TrayGroup = styled.div`
  display: flex;
  align-items: center;
  gap: 14px;
  margin: 0 14px 0 12px;
`;
const Clock = styled.div`
  display: flex;
  flex-direction: column;
  align-items: flex-end;
  font-size: 23px;
  line-height: 32px;
`;
